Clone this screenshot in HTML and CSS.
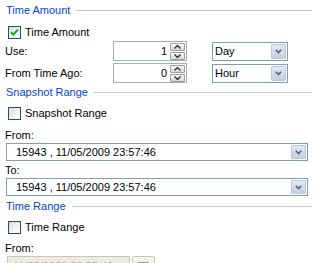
FILE: index.html
```html
<!DOCTYPE html>
<html>
<head>
<meta charset="utf-8">
<link rel="stylesheet" href="styles.css">
</head>
<body>
<div class="panel">
  <div class="group-title"><span>Time Amount</span></div>
  <div class="check-row first">
    <span class="checkbox checked">
      <svg width="11" height="11" viewBox="0 0 11 11"><path d="M2 5.2 L4.3 7.5 L9 2.6" fill="none" stroke="#21a121" stroke-width="2"/></svg>
    </span>
    <span>Time Amount</span>
  </div>
  <div class="field-row use">
    <span class="field-label">Use:</span>
    <span class="spin"><span class="spin-val">1</span><span class="spin-btns"><span class="sb"><svg width="7" height="4" viewBox="0 0 7 4"><path d="M0.5 3.5 L3.5 0.5 L6.5 3.5" fill="none" stroke="#333" stroke-width="1.4"/></svg></span><span class="sb"><svg width="7" height="4" viewBox="0 0 7 4"><path d="M0.5 0.5 L3.5 3.5 L6.5 0.5" fill="none" stroke="#333" stroke-width="1.4"/></svg></span></span></span>
    <span class="select small"><span class="sel-text">Day</span><span class="drop"><svg width="7" height="5" viewBox="0 0 7 5"><path d="M0.8 0.8 L3.5 3.6 L6.2 0.8" fill="none" stroke="#4d6185" stroke-width="1.6"/></svg></span></span>
  </div>
  <div class="field-row ago">
    <span class="field-label">From Time Ago:</span>
    <span class="spin"><span class="spin-val">0</span><span class="spin-btns"><span class="sb"><svg width="7" height="4" viewBox="0 0 7 4"><path d="M0.5 3.5 L3.5 0.5 L6.5 3.5" fill="none" stroke="#333" stroke-width="1.4"/></svg></span><span class="sb"><svg width="7" height="4" viewBox="0 0 7 4"><path d="M0.5 0.5 L3.5 3.5 L6.5 0.5" fill="none" stroke="#333" stroke-width="1.4"/></svg></span></span></span>
    <span class="select small"><span class="sel-text">Hour</span><span class="drop"><svg width="7" height="5" viewBox="0 0 7 5"><path d="M0.8 0.8 L3.5 3.6 L6.2 0.8" fill="none" stroke="#4d6185" stroke-width="1.6"/></svg></span></span>
  </div>

  <div class="group-title g2"><span>Snapshot Range</span></div>
  <div class="check-row">
    <span class="checkbox"></span>
    <span>Snapshot Range</span>
  </div>
  <div class="lbl l-from">From:</div>
  <div class="select wide"><span class="sel-text pad">15943 , 11/05/2009 23:57:46</span><span class="drop"><svg width="7" height="5" viewBox="0 0 7 5"><path d="M0.8 0.8 L3.5 3.6 L6.2 0.8" fill="none" stroke="#4d6185" stroke-width="1.6"/></svg></span></div>
  <div class="lbl l-to">To:</div>
  <div class="select wide"><span class="sel-text pad">15943 , 11/05/2009 23:57:46</span><span class="drop"><svg width="7" height="5" viewBox="0 0 7 5"><path d="M0.8 0.8 L3.5 3.6 L6.2 0.8" fill="none" stroke="#4d6185" stroke-width="1.6"/></svg></span></div>

  <div class="group-title g3"><span>Time Range</span></div>
  <div class="check-row">
    <span class="checkbox"></span>
    <span>Time Range</span>
  </div>
  <div class="lbl l-from2">From:</div>
  <div class="date-row">
    <span class="date-input">11/05/2009 23:57:46</span>
    <span class="date-btn"><span class="date-btn-bar"></span></span>
  </div>
</div>
</body>
</html>
```
FILE: styles.css
```css
html, body {
  margin: 0;
  padding: 0;
  background: #fff;
}
body {
  width: 314px;
  height: 263px;
  overflow: hidden;
  font-family: "Liberation Sans", Arial, sans-serif;
  font-size: 11px;
  color: #000;
}
.panel {
  padding: 3px 2px 0 5px;
}
.group-title {
  display: flex;
  align-items: center;
  height: 14px;
  line-height: 14px;
  color: #0046d5;
}
.group-title span {
  margin-left: 1px;
}
.group-title::after {
  content: "";
  flex: 1;
  height: 1px;
  background: #c8c8c0;
  margin-left: 6px;
}
.g2 { margin-top: 2px; }
.g3 { margin-top: 3px; }

.check-row {
  display: flex;
  align-items: center;
  gap: 4px;
  margin-left: 3px;
  margin-top: 8px;
  height: 13px;
  line-height: 13px;
}
.check-row.first { margin-top: 9px; }
.checkbox {
  box-sizing: border-box;
  width: 13px;
  height: 13px;
  border: 1px solid #1c5180;
  background: linear-gradient(135deg, #dcdcd7 0%, #f4f4f0 60%, #ffffff 100%);
  display: flex;
  align-items: center;
  justify-content: center;
}

.field-row {
  display: flex;
  align-items: center;
  height: 20px;
}
.field-row.use { margin-top: 2px; }
.field-row.ago { margin-top: 2px; }
.field-label {
  width: 108px;
}
.spin {
  box-sizing: border-box;
  width: 74px;
  height: 20px;
  border: 1px solid #a5acb2;
  display: flex;
  align-items: center;
  justify-content: flex-end;
  padding-right: 1px;
}
.spin-val {
  margin-right: 3px;
}
.spin-btns {
  display: flex;
  flex-direction: column;
  gap: 1px;
}
.sb {
  box-sizing: border-box;
  width: 15px;
  height: 8px;
  border: 1px solid #a0a0a0;
  border-radius: 1px;
  background: linear-gradient(#f8f8f8, #d8d8d8);
  display: flex;
  align-items: center;
  justify-content: center;
}
.select {
  box-sizing: border-box;
  border: 1px solid #7f9db9;
  display: flex;
  align-items: center;
  background: #fff;
}
.select.small {
  width: 76px;
  height: 19px;
  margin-left: 25px;
}
.select.wide {
  width: 302px;
  height: 18px;
  margin-left: 1px;
}
.sel-text {
  flex: 1;
  padding-left: 2px;
  white-space: nowrap;
  overflow: hidden;
}
.sel-text.pad {
  padding-left: 9px;
}
.drop {
  box-sizing: border-box;
  width: 15px;
  height: calc(100% - 2px);
  margin-right: 1px;
  border: 1px solid #bac6e2;
  border-radius: 1px;
  background: linear-gradient(#e4e8f2, #c6cddc);
  display: flex;
  align-items: center;
  justify-content: center;
}
.lbl {
  height: 13px;
  line-height: 13px;
}
.l-from { margin-top: 9px; margin-bottom: 1px; }
.l-to { margin-top: 3px; margin-bottom: 1px; }
.l-from2 { margin-top: 8px; margin-bottom: 1px; }

.date-row {
  display: flex;
  gap: 2px;
  margin-left: 2px;
}
.date-input {
  box-sizing: border-box;
  width: 123px;
  height: 20px;
  border: 1px solid #c9c7ba;
  background: #ebebe4;
  color: #aca899;
  padding-left: 5px;
  line-height: 18px;
  white-space: nowrap;
  overflow: hidden;
}
.date-btn {
  box-sizing: border-box;
  width: 23px;
  height: 20px;
  border: 1px solid #c9c7ba;
  border-radius: 2px;
  background: #f5f4ea;
  display: flex;
  justify-content: center;
  padding-top: 5px;
}
.date-btn-bar {
  width: 11px;
  height: 3px;
  background: #9a9a90;
}
```
